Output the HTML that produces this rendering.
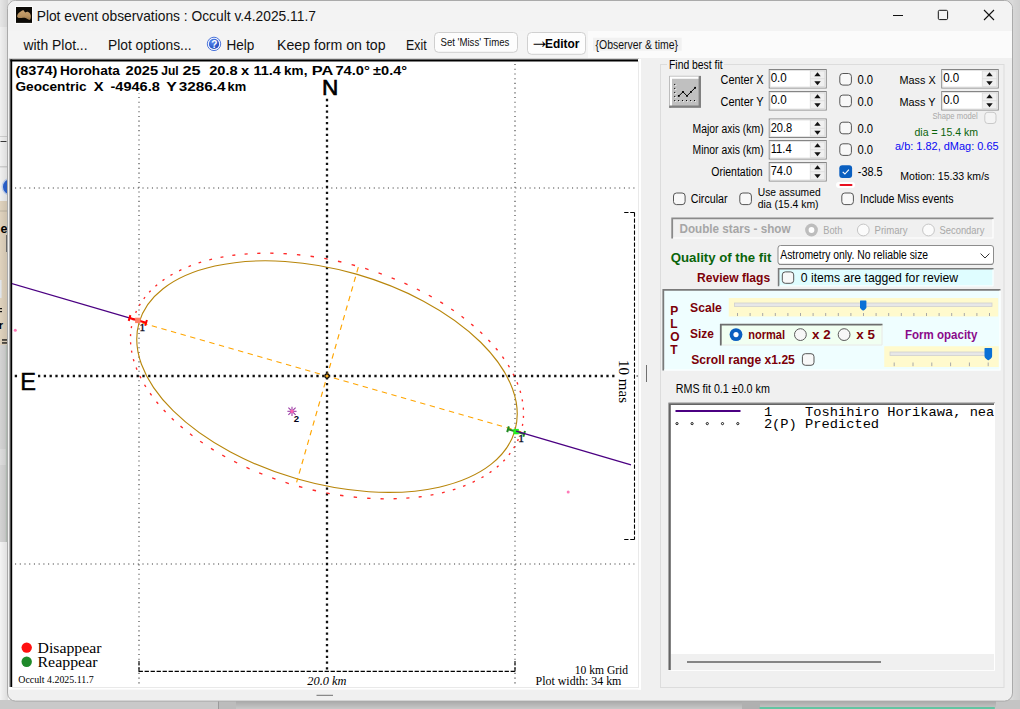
<!DOCTYPE html>
<html lang="en"><head><meta charset="utf-8"><title>Plot event observations : Occult v.4.2025.11.7</title>
<style>
html,body{margin:0;padding:0;background:#d4d4d4;overflow:hidden}
svg{display:block}
text{white-space:pre}
.sa{font-family:"Liberation Sans",Arial,sans-serif}
.se{font-family:"Liberation Serif","Times New Roman",serif}
.mo{font-family:"Liberation Mono","Courier New",monospace}
</style></head><body>
<svg width="1020" height="709" viewBox="0 0 1020 709">
<defs>
<linearGradient id="shL" x1="0" x2="1" y1="0" y2="0"><stop offset="0" stop-color="#000" stop-opacity="0"/><stop offset="1" stop-color="#000" stop-opacity="0.09"/></linearGradient>
<linearGradient id="shR" x1="1" x2="0" y1="0" y2="0"><stop offset="0" stop-color="#000" stop-opacity="0.06"/><stop offset="1" stop-color="#000" stop-opacity="0.02"/></linearGradient>
<linearGradient id="shB" x1="0" x2="0" y1="1" y2="0"><stop offset="0" stop-color="#000" stop-opacity="0.06"/><stop offset="1" stop-color="#000" stop-opacity="0.2"/></linearGradient>
<radialGradient id="helpg" cx="0.35" cy="0.3" r="0.8"><stop offset="0" stop-color="#5c8cf2"/><stop offset="1" stop-color="#1a44b8"/></radialGradient>
<linearGradient id="botg" x1="0" x2="0" y1="0" y2="1"><stop offset="0" stop-color="#a4a4a4"/><stop offset="1" stop-color="#c8c8c8"/></linearGradient>
<linearGradient id="astg" x1="0" x2="0" y1="0" y2="1"><stop offset="0" stop-color="#c8a270"/><stop offset="0.6" stop-color="#b8925f"/><stop offset="1" stop-color="#94744a"/></linearGradient>
<clipPath id="plotclip"><rect x="12" y="61" width="626" height="626"/></clipPath>
<clipPath id="listclip"><rect x="670" y="404" width="324.3" height="250"/></clipPath>
</defs>
<g id="desktop-backdrop">
<rect x="0" y="0" width="1020" height="709" fill="#d9d9d9"/>
<rect x="0" y="0" width="10" height="27" fill="#e6e6e6"/>
<rect x="0" y="27" width="10" height="174" fill="#f0f0f0"/>
<rect x="0" y="136" width="10" height="1" fill="#cfcfcf"/>
<rect x="0" y="166" width="10" height="1.5" fill="#cfcfcf"/>
<rect x="0.5" y="141" width="6" height="1" fill="#3a3a3a"/>
<circle cx="10.7" cy="186.8" r="8.5" fill="#2a62d0" stroke="#c4d4f0" stroke-width="1.5"/>
<rect x="0" y="201" width="10" height="144" fill="#dfd2bd"/>
<rect x="0" y="210.5" width="10" height="1" fill="#bdb3a4"/>
<text class="sa" x="0.50" y="232.80" font-size="12.5" font-weight="bold" fill="#000">e</text>
<rect x="6" y="235" width="1.2" height="17" fill="#6e6e6e"/>
<rect x="0" y="280" width="1.6" height="18" fill="#e2e6ec"/>
<rect x="0" y="308" width="2" height="1.2" fill="#111"/>
<rect x="0" y="311" width="2" height="1.2" fill="#111"/>
<text class="sa" x="-1.20" y="329.00" font-size="11" font-weight="bold" fill="#000">r</text>
<rect x="2" y="339.3" width="5.5" height="1.3" fill="#111"/>
<rect x="2" y="342.3" width="5.5" height="1.3" fill="#111"/>
<rect x="0" y="345" width="10" height="197" fill="#d3d3d3"/>
<rect x="0" y="449" width="10" height="16" fill="#dcdcdc"/>
<rect x="5.8" y="345" width="1.7" height="197" fill="#bcc6be"/>
<rect x="0" y="542" width="10" height="158" fill="#f3f3f3"/>
<rect x="1012" y="0" width="8" height="709" fill="#dcdcdc"/>
<rect x="0" y="700" width="1020" height="9" fill="#c9c9c9"/>
<rect x="218" y="700" width="18" height="9" fill="#bcbcbc"/>
<rect x="218" y="700" width="1" height="9" fill="#9a9a9a"/>
<rect x="236" y="700" width="506" height="9" fill="url(#botg)"/>
<rect x="742" y="700" width="18" height="9" fill="#b0b0b0"/>
<rect x="760" y="700" width="236" height="9" fill="url(#botg)"/>
<rect x="759.6" y="707" width="235.2" height="2" fill="#62c4a2"/>
<rect x="996" y="700" width="24" height="9" fill="#c4c4c4"/>
<rect x="0" y="0" width="8" height="700" fill="url(#shL)"/>
<rect x="1012.5" y="0" width="7.5" height="700" fill="url(#shR)"/>
</g>
<g id="window-frame">
<rect x="7.5" y="0.5" width="1005" height="700.6" rx="8" fill="#f0f0f0" stroke="#aaaaaa" stroke-width="1"/>
<path d="M8 31 V8.5 a7.5 7.5 0 0 1 7.5 -7.5 H1004.5 a7.5 7.5 0 0 1 7.5 7.5 V31 Z" fill="#f3f3f3"/>
<rect x="8" y="31" width="1004" height="27" fill="#fbfbfb"/>
<rect x="8" y="31" width="580" height="27" fill="#f4f4f4"/>
</g>
<g id="titlebar">
<rect x="15" y="6" width="18" height="18" fill="#fcfcfc"/>
<rect x="16" y="7" width="16" height="15.9" fill="#0c0a06"/>
<path d="M17.1 16.2 C17.3 13.9 19.6 12.1 21.4 11.1 C22.2 10.2 23.2 9.8 23.8 10.6 C24.4 11.4 24.6 12.3 25.3 12.4 C26.3 11.9 27.2 11.5 28.2 11.9 C30 12.6 31 14.6 30.9 16.6 C30.9 18.6 30.3 20 29.3 19.9 C28 19.7 27 18.8 25.6 18.1 C24.2 17.4 23.2 17.9 21.8 17.9 C20.2 18.1 18.6 18.3 17.8 17.6 C17.3 17.2 17.1 16.8 17.1 16.2 Z" fill="url(#astg)"/>
<text class="sa" x="36.70" y="20.60" font-size="14.1" fill="#111" textLength="279.20" lengthAdjust="spacingAndGlyphs">Plot event observations : Occult v.4.2025.11.7</text>
<line x1="893" y1="15.5" x2="903" y2="15.5" stroke="#111" stroke-width="1"/>
<rect x="938.3" y="10.3" width="9.3" height="9.3" fill="none" stroke="#111" stroke-width="1" rx="1.3"/>
<path d="M984 10 L994 20 M994 10 L984 20" stroke="#111" stroke-width="1.1" fill="none"/>
</g>
<g id="menubar">
<text class="sa" x="23.50" y="49.60" font-size="14.1" fill="#111" textLength="64.10" lengthAdjust="spacingAndGlyphs">with Plot...</text>
<text class="sa" x="108.00" y="49.60" font-size="14.1" fill="#111" textLength="83.60" lengthAdjust="spacingAndGlyphs">Plot options...</text>
<circle cx="214" cy="43.9" r="6.7" fill="#f4f7ff" stroke="#3a66d6" stroke-width="0.9"/>
<circle cx="214" cy="43.9" r="5.1" fill="url(#helpg)"/>
<text class="sa" x="211.25" y="47.50" font-size="10" font-weight="bold" fill="#fff">?</text>
<text class="sa" x="226.50" y="49.60" font-size="14.1" fill="#111" textLength="27.85" lengthAdjust="spacingAndGlyphs">Help</text>
<text class="sa" x="277.00" y="49.60" font-size="14.1" fill="#111" textLength="108.60" lengthAdjust="spacingAndGlyphs">Keep form on top</text>
<text class="sa" x="406.00" y="49.60" font-size="14.1" fill="#111" textLength="20.60" lengthAdjust="spacingAndGlyphs">Exit</text>
<rect x="434.5" y="32.5" width="83" height="19.8" fill="#fdfdfd" stroke="#cfcfcf" stroke-width="1" rx="4"/>
<text class="sa" x="440.50" y="45.90" font-size="11" fill="#111" textLength="68.85" lengthAdjust="spacingAndGlyphs">Set 'Miss' Times</text>
<rect x="527.5" y="32.5" width="58" height="21.8" fill="#fdfdfd" stroke="#d0d0d0" stroke-width="1" rx="4"/>
<text class="sa" x="529.40" y="48.40" font-size="24" fill="#000" textLength="20.10" lengthAdjust="spacingAndGlyphs">→</text>
<text class="sa" x="545.00" y="47.70" font-size="12.5" font-weight="bold" fill="#000" textLength="34.40" lengthAdjust="spacingAndGlyphs">Editor</text>
<rect x="593" y="37.7" width="88.7" height="13" fill="#f1f1f1"/>
<text class="sa" x="595.50" y="49.20" font-size="12.3" fill="#111" textLength="82.60" lengthAdjust="spacingAndGlyphs">{Observer &amp; time}</text>
</g>
<g id="plot-area">
<rect x="9" y="59" width="630.5" height="628.5" fill="#fff"/>
<rect x="9" y="58.6" width="630" height="1" fill="#a0a0a0"/>
<rect x="9.3" y="59" width="1.2" height="628" fill="#8c8c8c"/>
<rect x="10.4" y="59.5" width="628.6" height="2" fill="#000"/>
<rect x="10.4" y="59.5" width="1.8" height="628" fill="#000"/>
<rect x="638" y="59" width="3" height="630.6" fill="#fff"/>
<rect x="9" y="687" width="632" height="2.6" fill="#fff"/>
<rect x="638.06" y="61" width="0.7" height="626.6" fill="#e0e0e0"/>
<rect x="12" y="687" width="626.7" height="0.7" fill="#e0e0e0"/>
<g clip-path="url(#plotclip)">
<line x1="139" y1="59.25" x2="139" y2="687" stroke="#3a3a3a" stroke-width="1.1" stroke-dasharray="1.1 3.62"/>
<line x1="515" y1="59.25" x2="515" y2="687" stroke="#3a3a3a" stroke-width="1.1" stroke-dasharray="1.1 3.62"/>
<line x1="10.3" y1="188" x2="638" y2="188" stroke="#3a3a3a" stroke-width="1.1" stroke-dasharray="1.1 3.62"/>
<line x1="10.3" y1="564" x2="638" y2="564" stroke="#3a3a3a" stroke-width="1.1" stroke-dasharray="1.1 3.62"/>
<line x1="327" y1="98.85" x2="327" y2="669.5" stroke="#111" stroke-width="2.3" stroke-dasharray="2.3 3.5"/>
<line x1="14.75" y1="376" x2="614.5" y2="376" stroke="#111" stroke-width="2.3" stroke-dasharray="2.3 3.5"/>
<rect x="636.5" y="375" width="2" height="2" fill="#999"/>
<path d="M133.00 320.37L133.58 318.47M135.66 312.86L136.47 311.04M139.26 305.67L140.30 303.92M143.77 298.81L145.04 297.15M149.17 292.33L150.66 290.77M155.44 286.26L157.14 284.81M162.55 280.62L164.45 279.29M170.45 275.45L172.55 274.24M179.12 270.77L181.40 269.68M188.51 266.61L190.97 265.65M198.58 262.97L201.19 262.15M209.27 259.89L212.03 259.20M220.53 257.37L223.43 256.83M232.31 255.43L235.33 255.03M244.56 254.08L247.68 253.83M257.20 253.32L260.42 253.22M270.19 253.16L273.48 253.21M283.45 253.59L286.80 253.79M296.92 254.63L300.32 254.98M310.55 256.25L313.97 256.75M324.25 258.46L327.68 259.10M337.96 261.24L341.38 262.02M351.62 264.58L355.02 265.50M365.16 268.46L368.52 269.52M378.52 272.87L381.82 274.05M391.62 277.78L394.85 279.08M404.41 283.17L407.55 284.59M416.82 289.01L419.86 290.53M428.80 295.27L431.72 296.90M440.28 301.93L443.06 303.65M451.20 308.95L453.84 310.75M461.53 316.29L464.01 318.17M471.19 323.93L473.50 325.88M480.16 331.82L482.28 333.82M488.37 339.92L490.31 341.97M495.81 348.20L497.54 350.29M502.41 356.62L503.93 358.74M508.17 365.13L509.47 367.26M513.04 373.69L514.12 375.83M517.01 382.26L517.85 384.40M520.05 390.81L520.66 392.93M522.14 399.28L522.52 401.38M523.29 407.64L523.43 409.70M523.49 415.84L523.38 417.86M522.72 423.85L522.38 425.82M521.00 431.63L520.42 433.53M518.34 439.14L517.53 440.96M514.74 446.33L513.70 448.08M510.23 453.19L508.96 454.85M504.83 459.67L503.34 461.23M498.56 465.74L496.86 467.19M491.45 471.38L489.55 472.71M483.55 476.55L481.45 477.76M474.88 481.23L472.60 482.32M465.49 485.39L463.03 486.35M455.42 489.03L452.81 489.85M444.73 492.11L441.97 492.80M433.47 494.63L430.57 495.17M421.69 496.57L418.67 496.97M409.44 497.92L406.32 498.17M396.80 498.68L393.58 498.78M383.81 498.84L380.52 498.79M370.55 498.41L367.20 498.21M357.08 497.37L353.68 497.02M343.45 495.75L340.03 495.25M329.75 493.54L326.32 492.90M316.04 490.76L312.62 489.98M302.38 487.42L298.98 486.50M288.84 483.54L285.48 482.48M275.48 479.13L272.18 477.95M262.38 474.22L259.15 472.92M249.59 468.83L246.45 467.41M237.18 462.99L234.14 461.47M225.20 456.73L222.28 455.10M213.72 450.07L210.94 448.35M202.80 443.05L200.16 441.25M192.47 435.71L189.99 433.83M182.81 428.07L180.50 426.12M173.84 420.18L171.72 418.18M165.63 412.08L163.69 410.03M158.19 403.80L156.46 401.71M151.59 395.38L150.07 393.26M145.83 386.87L144.53 384.74M140.96 378.31L139.88 376.17M136.99 369.74L136.15 367.60M133.95 361.19L133.34 359.07M131.86 352.72L131.48 350.62M130.71 344.36L130.57 342.30M130.51 336.16L130.62 334.14M131.28 328.15L131.62 326.18" fill="none" stroke="#ff2a2a" stroke-width="1.35"/>
<ellipse cx="327" cy="376.6" rx="195.52" ry="106.61" transform="rotate(-164.000 327 376.6)" fill="none" stroke="#b8860b" stroke-width="1.12"/>
<line x1="135.68969727435575" y1="321.1426534453008" x2="521.6747186614284" y2="431.82207730005865" stroke="#ffa500" stroke-width="1.15" stroke-dasharray="5.4 4.57" stroke-dashoffset="-6.8"/>
<line x1="358.6" y1="266.2" x2="296.6" y2="482.4" stroke="#ffa500" stroke-width="1.15" stroke-dasharray="5.4 4.57" stroke-dashoffset="-1"/>
<circle cx="327" cy="376" r="2.1" fill="#ffb020" stroke="#111" stroke-width="1.1"/>
<line x1="10" y1="282.9687549563838" x2="137.8" y2="320.4" stroke="#4b0082" stroke-width="1.3"/>
<line x1="129.5467174974092" y1="317.9827023492279" x2="146.05328250259083" y2="322.81729765077205" stroke="#ff0000" stroke-width="2"/>
<line x1="130.38996086395758" y1="315.1036503134404" x2="128.7034741308608" y2="320.8617543850154" stroke="#ff0000" stroke-width="2"/>
<line x1="146.89652586913923" y1="319.93824561498457" x2="145.21003913604244" y2="325.69634968655953" stroke="#ff0000" stroke-width="2"/>
<rect x="135.10000000000002" y="317.7" width="5.4" height="5.4" fill="#ff7f66"/>
<line x1="508.03865429979504" y1="429.23891857366453" x2="524.1613457002051" y2="433.9610814263355" stroke="#228b22" stroke-width="2"/>
<line x1="508.88189766634343" y1="426.35986653787705" x2="507.19541093324665" y2="432.117970609452" stroke="#228b22" stroke-width="2"/>
<line x1="525.0045890667534" y1="431.08202939054803" x2="523.3181023336567" y2="436.840133462123" stroke="#228b22" stroke-width="2"/>
<rect x="513.4" y="428.90000000000003" width="5.4" height="5.4" fill="#22ee22"/>
<line x1="516.1" y1="431.2" x2="631" y2="464.8529738302934" stroke="#4b0082" stroke-width="1.3"/>
<text class="se" x="139.60" y="330.80" font-size="11.4" fill="#080820" stroke="#080820" stroke-width="0.35">1</text>
<text class="se" x="518.30" y="442.00" font-size="11.4" fill="#080820" stroke="#080820" stroke-width="0.35">1</text>
<line x1="287.4" y1="411.3" x2="296.6" y2="411.3" stroke="#9a38a4" stroke-width="1.05"/>
<line x1="292" y1="406.7" x2="292" y2="415.90000000000003" stroke="#9a38a4" stroke-width="1.05"/>
<line x1="288.4" y1="407.7" x2="295.6" y2="414.90000000000003" stroke="#9a38a4" stroke-width="1.05"/>
<line x1="288.4" y1="414.90000000000003" x2="295.6" y2="407.7" stroke="#9a38a4" stroke-width="1.05"/>
<rect x="290.5" y="409.8" width="3" height="3" fill="#ff60b0"/>
<text class="sa" x="293.80" y="422.00" font-size="9.6" font-weight="bold" fill="#000018">2</text>
<circle cx="15.3" cy="330.3" r="1.5" fill="#ff7ab8"/><circle cx="568.2" cy="491.9" r="1.5" fill="#ff7ab8"/>
<line x1="634.5" y1="212.5" x2="634.5" y2="539.5" stroke="#000" stroke-width="1.1" stroke-dasharray="4.3 1.7"/>
<line x1="634.5" y1="212.5" x2="624" y2="212.5" stroke="#000" stroke-width="1.1" stroke-dasharray="4.3 1.7"/>
<line x1="634.5" y1="539.5" x2="624" y2="539.5" stroke="#000" stroke-width="1.1" stroke-dasharray="4.3 1.7"/>
<line x1="138.6" y1="671.4" x2="515.4" y2="671.4" stroke="#000" stroke-width="1.1" stroke-dasharray="4.3 1.7"/>
<line x1="139" y1="671.4" x2="139" y2="661" stroke="#000" stroke-width="1.1" stroke-dasharray="4.3 1.7"/>
<line x1="515" y1="671.4" x2="515" y2="661" stroke="#000" stroke-width="1.1" stroke-dasharray="4.3 1.7"/>
</g>
<rect x="14" y="62" width="396" height="15.5" fill="#fff"/>
<rect x="14" y="77" width="234" height="16" fill="#fff"/>
<text class="sa" y="75" font-size="12.6" font-weight="bold" fill="#000"><tspan x="15.50" textLength="41.85" lengthAdjust="spacingAndGlyphs">(8374)</tspan> <tspan x="60.00" textLength="59.85" lengthAdjust="spacingAndGlyphs">Horohata</tspan> <tspan x="125.50" textLength="32.60" lengthAdjust="spacingAndGlyphs">2025</tspan> <tspan x="161.25" textLength="17.35" lengthAdjust="spacingAndGlyphs">Jul</tspan> <tspan x="182.50" textLength="18.10" lengthAdjust="spacingAndGlyphs">25</tspan> <tspan x="209.20" textLength="28.50" lengthAdjust="spacingAndGlyphs">20.8</tspan> <tspan x="240.90" textLength="8.20" lengthAdjust="spacingAndGlyphs">x</tspan> <tspan x="253.40" textLength="27.40" lengthAdjust="spacingAndGlyphs">11.4</tspan> <tspan x="284.10" textLength="23.30" lengthAdjust="spacingAndGlyphs">km,</tspan> <tspan x="311.70" textLength="20.90" lengthAdjust="spacingAndGlyphs">PA</tspan> <tspan x="335.40" textLength="34.50" lengthAdjust="spacingAndGlyphs">74.0°</tspan> <tspan x="373.10" textLength="34.10" lengthAdjust="spacingAndGlyphs">±0.4°</tspan></text>
<text class="sa" y="91" font-size="12.6" font-weight="bold" fill="#000"><tspan x="15.50" textLength="71.10" lengthAdjust="spacingAndGlyphs">Geocentric</tspan> <tspan x="93.75" textLength="9.85" lengthAdjust="spacingAndGlyphs">X</tspan> <tspan x="110.50" textLength="49.35" lengthAdjust="spacingAndGlyphs">-4946.8</tspan> <tspan x="166.25" textLength="10.35" lengthAdjust="spacingAndGlyphs">Y</tspan> <tspan x="178.75" textLength="46.85" lengthAdjust="spacingAndGlyphs">3286.4</tspan> <tspan x="227.50" textLength="18.60" lengthAdjust="spacingAndGlyphs">km</tspan></text>
<text class="sa" x="322.10" y="94.80" font-size="22.6" fill="#000" stroke="#000" stroke-width="0.7">N</text>
<rect x="20" y="372" width="18" height="19" fill="#fff"/>
<text class="sa" x="20.30" y="390.00" font-size="23.6" fill="#000" stroke="#000" stroke-width="0.5">E</text>
<g transform="translate(619.2 360.5) rotate(90)">
<text class="se" x="-0.50" y="0.00" font-size="15" fill="#000" textLength="43.10" lengthAdjust="spacingAndGlyphs">10 mas</text>
</g>
<circle cx="26.7" cy="647.6" r="5.2" fill="#ff1010"/>
<circle cx="26.7" cy="661.7" r="5.2" fill="#1f8a2a"/>
<text class="se" x="37.50" y="652.70" font-size="15.5" fill="#000" textLength="63.90" lengthAdjust="spacingAndGlyphs">Disappear</text>
<text class="se" x="37.50" y="666.90" font-size="15.5" fill="#000" textLength="60.00" lengthAdjust="spacingAndGlyphs">Reappear</text>
<text class="se" x="18.30" y="683.00" font-size="9.6" fill="#000" textLength="75.30" lengthAdjust="spacingAndGlyphs">Occult 4.2025.11.7</text>
<text class="se" x="307.30" y="685.00" font-size="12.4" font-style="italic" fill="#000" textLength="39.20" lengthAdjust="spacingAndGlyphs">20.0 km</text>
<text class="se" x="574.80" y="674.00" font-size="11.6" fill="#000" textLength="53.30" lengthAdjust="spacingAndGlyphs">10 km Grid</text>
<text class="se" x="535.50" y="684.50" font-size="13" fill="#000" textLength="85.90" lengthAdjust="spacingAndGlyphs">Plot width: 34 km</text>
<line x1="646.5" y1="365" x2="646.5" y2="382" stroke="#707070" stroke-width="1"/>
<line x1="316.5" y1="695.3" x2="333" y2="695.3" stroke="#707070" stroke-width="1"/>
</g>
<g id="side-panel">
<rect x="660.5" y="64.5" width="343.5" height="623" fill="none" stroke="#dcdcdc" stroke-width="1"/>
<rect x="667" y="58" width="57" height="13" fill="#f0f0f0"/>
<text class="sa" x="669.00" y="69.00" font-size="12.3" fill="#000" textLength="53.60" lengthAdjust="spacingAndGlyphs">Find best fit</text>
<rect x="669.2" y="75.9" width="31.8" height="31.9" fill="#c0c0c0"/>
<path d="M669.7 107.8 V76.4 H701" fill="none" stroke="#a6a6a6" stroke-width="1"/>
<path d="M670.9 106.4 V77.7 H699.4" fill="none" stroke="#ffffff" stroke-width="2.2"/>
<path d="M699.8 76.4 V106.6 H669.7" fill="none" stroke="#808080" stroke-width="2.4"/>
<path d="M698.6 76 L701 76 L701 78.4 Z" fill="#808080"/><path d="M669.2 105.4 L669.2 107.8 L671.6 107.8 Z" fill="#808080"/>
<rect x="675.0" y="84.4" width="1.3" height="1.3" fill="#fff"/>
<rect x="674.2" y="83.9" width="1.1" height="1.1" fill="#000"/>
<rect x="675.0" y="88.4" width="1.3" height="1.3" fill="#fff"/>
<rect x="674.2" y="87.9" width="1.1" height="1.1" fill="#000"/>
<rect x="675.0" y="92.4" width="1.3" height="1.3" fill="#fff"/>
<rect x="674.2" y="91.9" width="1.1" height="1.1" fill="#000"/>
<rect x="675.0" y="96.4" width="1.3" height="1.3" fill="#fff"/>
<rect x="674.2" y="95.9" width="1.1" height="1.1" fill="#000"/>
<rect x="675.0" y="100.5" width="1.3" height="1.3" fill="#fff"/>
<rect x="674.2" y="100.0" width="1.1" height="1.1" fill="#000"/>
<rect x="678.6" y="100.5" width="1.3" height="1.3" fill="#fff"/>
<rect x="678.1" y="100.0" width="1.1" height="1.1" fill="#000"/>
<rect x="682.5" y="100.5" width="1.3" height="1.3" fill="#fff"/>
<rect x="682.0" y="100.0" width="1.1" height="1.1" fill="#000"/>
<rect x="686.5" y="100.5" width="1.3" height="1.3" fill="#fff"/>
<rect x="686.0" y="100.0" width="1.1" height="1.1" fill="#000"/>
<rect x="690.6" y="100.5" width="1.3" height="1.3" fill="#fff"/>
<rect x="690.1" y="100.0" width="1.1" height="1.1" fill="#000"/>
<rect x="694.5" y="100.5" width="1.3" height="1.3" fill="#fff"/>
<rect x="694.0" y="100.0" width="1.1" height="1.1" fill="#000"/>
<path d="M678.8 95.9 L683 91.9 L687 95.9 L691 91.9 L695.1 87.8" fill="none" stroke="#000" stroke-width="1"/>
<rect x="677.9" y="95.0" width="1.8" height="1.8" fill="#000"/>
<rect x="682.1" y="91.0" width="1.8" height="1.8" fill="#000"/>
<rect x="686.1" y="95.0" width="1.8" height="1.8" fill="#000"/>
<rect x="690.1" y="91.0" width="1.8" height="1.8" fill="#000"/>
<rect x="694.2" y="86.89999999999999" width="1.8" height="1.8" fill="#000"/>
<text class="sa" x="720.50" y="84.00" font-size="12.3" fill="#000" textLength="43.10" lengthAdjust="spacingAndGlyphs">Center X</text>
<rect x="769.25" y="69.5" width="57" height="18.5" fill="#fff" stroke="#858585" stroke-width="1"/>
<rect x="770.25" y="70.5" width="55" height="16.5" fill="none" stroke="#e4e4e4" stroke-width="1"/>
<rect x="810.25" y="71" width="14.5" height="15.5" fill="#f0f0f0" stroke="#dadada" stroke-width="0.8"/>
<line x1="810.25" y1="78.75" x2="824.75" y2="78.75" stroke="#dadada" stroke-width="0.8"/>
<path d="M814.3 76.15 L817.5 72.35 L820.7 76.15 Z" fill="#111"/>
<path d="M814.3 81.35 L817.5 85.15 L820.7 81.35 Z" fill="#111"/>
<text class="sa" x="770.65" y="82.30" font-size="12.3" fill="#000" textLength="16.10" lengthAdjust="spacingAndGlyphs">0.0</text>
<rect x="839.8" y="73.5" width="11.6" height="11.6" fill="#f8f8f8" stroke="#555555" stroke-width="1" rx="3"/>
<text class="sa" x="857.50" y="84.00" font-size="12.3" fill="#000" textLength="15.60" lengthAdjust="spacingAndGlyphs">0.0</text>
<text class="sa" x="720.50" y="105.50" font-size="12.3" fill="#000" textLength="43.10" lengthAdjust="spacingAndGlyphs">Center Y</text>
<rect x="769.25" y="91.5" width="57" height="18.5" fill="#fff" stroke="#858585" stroke-width="1"/>
<rect x="770.25" y="92.5" width="55" height="16.5" fill="none" stroke="#e4e4e4" stroke-width="1"/>
<rect x="810.25" y="93" width="14.5" height="15.5" fill="#f0f0f0" stroke="#dadada" stroke-width="0.8"/>
<line x1="810.25" y1="100.75" x2="824.75" y2="100.75" stroke="#dadada" stroke-width="0.8"/>
<path d="M814.3 98.15 L817.5 94.35 L820.7 98.15 Z" fill="#111"/>
<path d="M814.3 103.35 L817.5 107.15 L820.7 103.35 Z" fill="#111"/>
<text class="sa" x="770.65" y="104.30" font-size="12.3" fill="#000" textLength="16.10" lengthAdjust="spacingAndGlyphs">0.0</text>
<rect x="839.8" y="95.1" width="11.6" height="11.6" fill="#f8f8f8" stroke="#555555" stroke-width="1" rx="3"/>
<text class="sa" x="857.50" y="105.50" font-size="12.3" fill="#000" textLength="15.60" lengthAdjust="spacingAndGlyphs">0.0</text>
<text class="sa" x="899.50" y="84.00" font-size="11.6" fill="#000" textLength="36.10" lengthAdjust="spacingAndGlyphs">Mass X</text>
<rect x="941.75" y="69.5" width="56.5" height="18.5" fill="#fff" stroke="#858585" stroke-width="1"/>
<rect x="942.75" y="70.5" width="54.5" height="16.5" fill="none" stroke="#e4e4e4" stroke-width="1"/>
<rect x="982.25" y="71" width="14.5" height="15.5" fill="#f0f0f0" stroke="#dadada" stroke-width="0.8"/>
<line x1="982.25" y1="78.75" x2="996.75" y2="78.75" stroke="#dadada" stroke-width="0.8"/>
<path d="M986.3 76.15 L989.5 72.35 L992.7 76.15 Z" fill="#111"/>
<path d="M986.3 81.35 L989.5 85.15 L992.7 81.35 Z" fill="#111"/>
<text class="sa" x="943.15" y="82.30" font-size="12.3" fill="#000" textLength="16.10" lengthAdjust="spacingAndGlyphs">0.0</text>
<text class="sa" x="899.50" y="105.50" font-size="11.6" fill="#000" textLength="36.10" lengthAdjust="spacingAndGlyphs">Mass Y</text>
<rect x="941.75" y="91.5" width="56.5" height="18.5" fill="#fff" stroke="#858585" stroke-width="1"/>
<rect x="942.75" y="92.5" width="54.5" height="16.5" fill="none" stroke="#e4e4e4" stroke-width="1"/>
<rect x="982.25" y="93" width="14.5" height="15.5" fill="#f0f0f0" stroke="#dadada" stroke-width="0.8"/>
<line x1="982.25" y1="100.75" x2="996.75" y2="100.75" stroke="#dadada" stroke-width="0.8"/>
<path d="M986.3 98.15 L989.5 94.35 L992.7 98.15 Z" fill="#111"/>
<path d="M986.3 103.35 L989.5 107.15 L992.7 103.35 Z" fill="#111"/>
<text class="sa" x="943.15" y="104.30" font-size="12.3" fill="#000" textLength="16.10" lengthAdjust="spacingAndGlyphs">0.0</text>
<text class="sa" x="932.50" y="119.00" font-size="8.4" fill="#a8a8a8" textLength="45.10" lengthAdjust="spacingAndGlyphs">Shape model</text>
<rect x="984.8" y="112.3" width="11.2" height="11.2" fill="#f4f4f4" stroke="#c9c9c9" stroke-width="1" rx="3"/>
<text class="sa" x="692.50" y="132.75" font-size="12.3" fill="#000" textLength="71.10" lengthAdjust="spacingAndGlyphs">Major axis (km)</text>
<rect x="769.25" y="119.0" width="57" height="18.5" fill="#fff" stroke="#858585" stroke-width="1"/>
<rect x="770.25" y="120.0" width="55" height="16.5" fill="none" stroke="#e4e4e4" stroke-width="1"/>
<rect x="810.25" y="120.5" width="14.5" height="15.5" fill="#f0f0f0" stroke="#dadada" stroke-width="0.8"/>
<line x1="810.25" y1="128.25" x2="824.75" y2="128.25" stroke="#dadada" stroke-width="0.8"/>
<path d="M814.3 125.65 L817.5 121.85 L820.7 125.65 Z" fill="#111"/>
<path d="M814.3 130.85 L817.5 134.65 L820.7 130.85 Z" fill="#111"/>
<text class="sa" x="770.65" y="131.80" font-size="12.3" fill="#000" textLength="21.60" lengthAdjust="spacingAndGlyphs">20.8</text>
<rect x="839.8" y="122.2" width="11.6" height="11.6" fill="#f8f8f8" stroke="#555555" stroke-width="1" rx="3"/>
<text class="sa" x="857.50" y="132.75" font-size="12.3" fill="#000" textLength="15.60" lengthAdjust="spacingAndGlyphs">0.0</text>
<text class="sa" x="914.50" y="135.50" font-size="11.2" fill="#0a640a" textLength="63.60" lengthAdjust="spacingAndGlyphs">dia = 15.4 km</text>
<text class="sa" x="692.50" y="154.30" font-size="12.3" fill="#000" textLength="71.10" lengthAdjust="spacingAndGlyphs">Minor axis (km)</text>
<rect x="769.25" y="140.5" width="57" height="18.5" fill="#fff" stroke="#858585" stroke-width="1"/>
<rect x="770.25" y="141.5" width="55" height="16.5" fill="none" stroke="#e4e4e4" stroke-width="1"/>
<rect x="810.25" y="142" width="14.5" height="15.5" fill="#f0f0f0" stroke="#dadada" stroke-width="0.8"/>
<line x1="810.25" y1="149.75" x2="824.75" y2="149.75" stroke="#dadada" stroke-width="0.8"/>
<path d="M814.3 147.15 L817.5 143.35 L820.7 147.15 Z" fill="#111"/>
<path d="M814.3 152.35 L817.5 156.15 L820.7 152.35 Z" fill="#111"/>
<text class="sa" x="770.65" y="153.30" font-size="12.3" fill="#000" textLength="21.10" lengthAdjust="spacingAndGlyphs">11.4</text>
<rect x="839.8" y="143.8" width="11.6" height="11.6" fill="#f8f8f8" stroke="#555555" stroke-width="1" rx="3"/>
<text class="sa" x="857.50" y="154.30" font-size="12.3" fill="#000" textLength="15.60" lengthAdjust="spacingAndGlyphs">0.0</text>
<text class="sa" x="895.00" y="149.75" font-size="11.2" fill="#0808f4" textLength="103.60" lengthAdjust="spacingAndGlyphs">a/b: 1.82, dMag: 0.65</text>
<text class="sa" x="711.25" y="175.75" font-size="12.3" fill="#000" textLength="51.35" lengthAdjust="spacingAndGlyphs">Orientation</text>
<rect x="769.25" y="162.5" width="57" height="18.5" fill="#fff" stroke="#858585" stroke-width="1"/>
<rect x="770.25" y="163.5" width="55" height="16.5" fill="none" stroke="#e4e4e4" stroke-width="1"/>
<rect x="810.25" y="164" width="14.5" height="15.5" fill="#f0f0f0" stroke="#dadada" stroke-width="0.8"/>
<line x1="810.25" y1="171.75" x2="824.75" y2="171.75" stroke="#dadada" stroke-width="0.8"/>
<path d="M814.3 169.15 L817.5 165.35 L820.7 169.15 Z" fill="#111"/>
<path d="M814.3 174.35 L817.5 178.15 L820.7 174.35 Z" fill="#111"/>
<text class="sa" x="770.65" y="175.30" font-size="12.3" fill="#000" textLength="21.60" lengthAdjust="spacingAndGlyphs">74.0</text>
<rect x="839.3" y="165.2" width="12.8" height="12.8" fill="#0a5fc0" rx="3"/>
<path d="M842.6999999999999 171.79999999999998 L844.9 174.0 L848.9 169.6" fill="none" stroke="#fff" stroke-width="1.1"/>
<text class="sa" x="857.75" y="175.75" font-size="12.3" fill="#000" textLength="24.85" lengthAdjust="spacingAndGlyphs">-38.5</text>
<rect x="836" y="182" width="19" height="6" fill="#fff" rx="3"/>
<line x1="840.5" y1="185" x2="851.5" y2="185" stroke="#e81020" stroke-width="2" stroke-linecap="round"/>
<text class="sa" x="900.25" y="180.00" font-size="11.6" fill="#000" textLength="89.10" lengthAdjust="spacingAndGlyphs">Motion: 15.33 km/s</text>
<rect x="673.5" y="193.0" width="11.6" height="11.6" fill="#f8f8f8" stroke="#555555" stroke-width="1" rx="3"/>
<text class="sa" x="690.75" y="203.00" font-size="12.3" fill="#000" textLength="36.85" lengthAdjust="spacingAndGlyphs">Circular</text>
<rect x="739.8" y="193.0" width="11.6" height="11.6" fill="#f8f8f8" stroke="#555555" stroke-width="1" rx="3"/>
<text class="sa" x="757.75" y="196.25" font-size="11.4" fill="#000" textLength="62.85" lengthAdjust="spacingAndGlyphs">Use assumed</text>
<text class="sa" x="757.75" y="208.00" font-size="11.4" fill="#000" textLength="60.85" lengthAdjust="spacingAndGlyphs">dia (15.4 km)</text>
<rect x="841.8" y="193.0" width="11.6" height="11.6" fill="#f8f8f8" stroke="#555555" stroke-width="1" rx="3"/>
<text class="sa" x="860.00" y="203.00" font-size="12.3" fill="#000" textLength="93.60" lengthAdjust="spacingAndGlyphs">Include Miss events</text>
<rect x="671.5" y="217.5" width="322" height="21" fill="#f0f0f0"/>
<path d="M672.2 238.5 V218.3 H993.5" fill="none" stroke="#8a8a8a" stroke-width="1.8"/>
<path d="M993 219 V238 H673" fill="none" stroke="#ffffff" stroke-width="1.2"/>
<text class="sa" x="679.50" y="233.00" font-size="12.4" font-weight="bold" fill="#a6a6a6" textLength="111.10" lengthAdjust="spacingAndGlyphs">Double stars - show</text>
<circle cx="811.5" cy="230" r="6.4" fill="#bdbdbd"/>
<circle cx="811.5" cy="230" r="2.9" fill="#fff"/>
<text class="sa" x="823.25" y="234.00" font-size="10.2" fill="#a8a8a8" textLength="19.10" lengthAdjust="spacingAndGlyphs">Both</text>
<circle cx="863.3" cy="230" r="5.9" fill="#fbfbfb" stroke="#c6c6c6" stroke-width="1"/>
<text class="sa" x="874.50" y="234.00" font-size="10.2" fill="#a8a8a8" textLength="33.10" lengthAdjust="spacingAndGlyphs">Primary</text>
<circle cx="928.5" cy="230" r="5.9" fill="#fbfbfb" stroke="#c6c6c6" stroke-width="1"/>
<text class="sa" x="939.50" y="234.00" font-size="10.2" fill="#a8a8a8" textLength="44.85" lengthAdjust="spacingAndGlyphs">Secondary</text>
<text class="sa" x="670.75" y="261.75" font-size="12.8" font-weight="bold" fill="#0a640a" textLength="100.60" lengthAdjust="spacingAndGlyphs">Quality of the fit</text>
<rect x="778" y="245.5" width="215.5" height="19" fill="#fff" stroke="#8c8c8c" stroke-width="1" rx="2.5"/>
<line x1="779" y1="264.3" x2="992.5" y2="264.3" stroke="#868686" stroke-width="1"/>
<text class="sa" x="780.25" y="259.00" font-size="12.3" fill="#000" textLength="147.85" lengthAdjust="spacingAndGlyphs">Astrometry only. No reliable size</text>
<path d="M980.6 253.6 L985 258 L989.4 253.6" fill="none" stroke="#333" stroke-width="1"/>
<text class="sa" x="697.00" y="281.75" font-size="12.8" font-weight="bold" fill="#7c0008" textLength="73.10" lengthAdjust="spacingAndGlyphs">Review flags</text>
<rect x="778" y="268" width="215.5" height="18.3" fill="#dffdff"/>
<path d="M778.6 286.3 V268.7 H993.5" fill="none" stroke="#7a7a7a" stroke-width="1.6"/>
<path d="M993 269.5 V285.9 H779.5" fill="none" stroke="#ffffff" stroke-width="1"/>
<rect x="782.3" y="271.9" width="11.4" height="11.4" fill="#f8f8f8" stroke="#555555" stroke-width="1" rx="3"/>
<text class="sa" x="800.75" y="282.25" font-size="13" fill="#000" textLength="157.35" lengthAdjust="spacingAndGlyphs">0 items are tagged for review</text>
<rect x="662.5" y="289" width="338" height="81.5" fill="#effeff"/>
<path d="M663.3 370.5 V289.8 H1000.5" fill="none" stroke="#7a7a7a" stroke-width="1.8"/>
<path d="M1000 290.5 V370 H664" fill="none" stroke="#ffffff" stroke-width="1.2"/>
<text class="sa" x="670.30" y="315.20" font-size="12" font-weight="bold" fill="#7c0008">P</text>
<text class="sa" x="670.30" y="327.90" font-size="12" font-weight="bold" fill="#7c0008">L</text>
<text class="sa" x="670.30" y="340.90" font-size="12" font-weight="bold" fill="#7c0008">O</text>
<text class="sa" x="670.30" y="354.20" font-size="12" font-weight="bold" fill="#7c0008">T</text>
<text class="sa" x="690.00" y="311.75" font-size="12.6" font-weight="bold" fill="#7c0008" textLength="31.85" lengthAdjust="spacingAndGlyphs">Scale</text>
<rect x="728.75" y="298" width="269.5" height="18.5" fill="#fffacd"/>
<rect x="734.5" y="303" width="257.5" height="3.5" fill="#e7e7e7" stroke="#cfcfcf" stroke-width="0.8"/>
<line x1="737.5" y1="313" x2="737.5" y2="316" stroke="#a8a8a8" stroke-width="1"/>
<line x1="750.1" y1="313" x2="750.1" y2="316" stroke="#a8a8a8" stroke-width="1"/>
<line x1="762.7" y1="313" x2="762.7" y2="316" stroke="#a8a8a8" stroke-width="1"/>
<line x1="775.3" y1="313" x2="775.3" y2="316" stroke="#a8a8a8" stroke-width="1"/>
<line x1="787.9" y1="313" x2="787.9" y2="316" stroke="#a8a8a8" stroke-width="1"/>
<line x1="800.5" y1="313" x2="800.5" y2="316" stroke="#a8a8a8" stroke-width="1"/>
<line x1="813.1" y1="313" x2="813.1" y2="316" stroke="#a8a8a8" stroke-width="1"/>
<line x1="825.7" y1="313" x2="825.7" y2="316" stroke="#a8a8a8" stroke-width="1"/>
<line x1="838.3" y1="313" x2="838.3" y2="316" stroke="#a8a8a8" stroke-width="1"/>
<line x1="850.9" y1="313" x2="850.9" y2="316" stroke="#a8a8a8" stroke-width="1"/>
<line x1="863.5" y1="313" x2="863.5" y2="316" stroke="#a8a8a8" stroke-width="1"/>
<line x1="876.1" y1="313" x2="876.1" y2="316" stroke="#a8a8a8" stroke-width="1"/>
<line x1="888.7" y1="313" x2="888.7" y2="316" stroke="#a8a8a8" stroke-width="1"/>
<line x1="901.3" y1="313" x2="901.3" y2="316" stroke="#a8a8a8" stroke-width="1"/>
<line x1="913.9" y1="313" x2="913.9" y2="316" stroke="#a8a8a8" stroke-width="1"/>
<line x1="926.5" y1="313" x2="926.5" y2="316" stroke="#a8a8a8" stroke-width="1"/>
<line x1="939.1" y1="313" x2="939.1" y2="316" stroke="#a8a8a8" stroke-width="1"/>
<line x1="951.7" y1="313" x2="951.7" y2="316" stroke="#a8a8a8" stroke-width="1"/>
<line x1="964.3" y1="313" x2="964.3" y2="316" stroke="#a8a8a8" stroke-width="1"/>
<line x1="976.9" y1="313" x2="976.9" y2="316" stroke="#a8a8a8" stroke-width="1"/>
<line x1="989.5" y1="313" x2="989.5" y2="316" stroke="#a8a8a8" stroke-width="1"/>
<path d="M860 301 a0.5 0.5 0 0 1 0.5 -0.5 H865.9 a0.5 0.5 0 0 1 0.5 0.5 V307.2 Q866.4 308.4 865.2 309.3 L863.7 310.4 Q863.2 310.7 862.7 310.4 L861.2 309.3 Q860 308.4 860 307.2 Z" fill="#0a70d6"/>
<text class="sa" x="690.00" y="338.00" font-size="12.6" font-weight="bold" fill="#7c0008" textLength="23.85" lengthAdjust="spacingAndGlyphs">Size</text>
<rect x="720" y="323.75" width="162.5" height="21.75" fill="#f1fff1"/>
<path d="M720.8 345.5 V324.6 H882.5" fill="none" stroke="#6e6e6e" stroke-width="1.8"/>
<path d="M882 325.5 V345 H721.8" fill="none" stroke="#e8e8e8" stroke-width="1"/>
<circle cx="736" cy="334.6" r="6.4" fill="#0a5fc0"/>
<circle cx="736" cy="334.6" r="2.6" fill="#fff"/>
<text class="sa" x="748.25" y="338.75" font-size="12.6" font-weight="bold" fill="#7c0008" textLength="36.85" lengthAdjust="spacingAndGlyphs">normal</text>
<circle cx="800.4" cy="334.6" r="5.9" fill="#f7f7f7" stroke="#5a5a5a" stroke-width="1"/>
<text class="sa" x="812.00" y="338.75" font-size="12.6" font-weight="bold" fill="#7c0008" textLength="18.60" lengthAdjust="spacingAndGlyphs">x 2</text>
<circle cx="844.1" cy="334.6" r="5.9" fill="#f7f7f7" stroke="#5a5a5a" stroke-width="1"/>
<text class="sa" x="856.25" y="338.75" font-size="12.6" font-weight="bold" fill="#7c0008" textLength="18.60" lengthAdjust="spacingAndGlyphs">x 5</text>
<text class="sa" x="905.00" y="338.75" font-size="12.6" font-weight="bold" fill="#8a0a8a" textLength="72.35" lengthAdjust="spacingAndGlyphs">Form opacity</text>
<text class="sa" x="691.25" y="363.75" font-size="12.6" font-weight="bold" fill="#7c0008" textLength="103.60" lengthAdjust="spacingAndGlyphs">Scroll range x1.25</text>
<rect x="802.4" y="353.7" width="11.6" height="11.6" fill="#f8f8f8" stroke="#555555" stroke-width="1" rx="3"/>
<rect x="884.25" y="346.25" width="114.5" height="20.75" fill="#fffacd"/>
<rect x="890" y="352" width="101.5" height="3.5" fill="#e7e7e7" stroke="#cfcfcf" stroke-width="0.8"/>
<line x1="894.2" y1="362.5" x2="894.2" y2="366.2" stroke="#a8a8a8" stroke-width="1"/>
<line x1="913.0" y1="362.5" x2="913.0" y2="366.2" stroke="#a8a8a8" stroke-width="1"/>
<line x1="931.8000000000001" y1="362.5" x2="931.8000000000001" y2="366.2" stroke="#a8a8a8" stroke-width="1"/>
<line x1="950.6" y1="362.5" x2="950.6" y2="366.2" stroke="#a8a8a8" stroke-width="1"/>
<line x1="969.4000000000001" y1="362.5" x2="969.4000000000001" y2="366.2" stroke="#a8a8a8" stroke-width="1"/>
<line x1="988.2" y1="362.5" x2="988.2" y2="366.2" stroke="#a8a8a8" stroke-width="1"/>
<path d="M984.5 348.6 a0.6 0.6 0 0 1 0.6 -0.6 H991.5 a0.6 0.6 0 0 1 0.6 0.6 V356.2 Q992.1 357.6 990.6 358.8 L988.9 360 Q988.3 360.4 987.7 360 L986 358.8 Q984.5 357.6 984.5 356.2 Z" fill="#0a70d6"/>
<text class="sa" x="675.75" y="393.00" font-size="12.3" fill="#000" textLength="94.10" lengthAdjust="spacingAndGlyphs">RMS fit 0.1 ±0.0 km</text>
<rect x="668" y="402.3" width="327" height="268" fill="#fff"/>
<path d="M668.5 670 V402.8 H995" fill="none" stroke="#a6a6a6" stroke-width="1"/>
<path d="M669.9 670 V404.2 H994" fill="none" stroke="#646464" stroke-width="1.8"/>
<rect x="671" y="654" width="323" height="16" fill="#f0f0f0"/>
<line x1="687" y1="662" x2="881" y2="662" stroke="#858585" stroke-width="2"/>
<rect x="671" y="670" width="324" height="0.8" fill="#fff"/>
<g clip-path="url(#listclip)">
<line x1="675.5" y1="411" x2="740.5" y2="411" stroke="#4b0082" stroke-width="1.8"/>
<circle cx="677" cy="423.6" r="1.1" fill="#fff" stroke="#111" stroke-width="0.95"/>
<circle cx="692.1" cy="423.6" r="1.1" fill="#fff" stroke="#111" stroke-width="0.95"/>
<circle cx="707.3" cy="423.6" r="1.1" fill="#fff" stroke="#111" stroke-width="0.95"/>
<circle cx="722.5" cy="423.6" r="1.1" fill="#fff" stroke="#111" stroke-width="0.95"/>
<circle cx="737.8" cy="423.6" r="1.1" fill="#fff" stroke="#111" stroke-width="0.95"/>
<text class="mo" x="763.90" y="415.50" font-size="11.9" fill="#000" textLength="238.67" lengthAdjust="spacingAndGlyphs">1    Toshihiro Horikawa, near</text>
<text class="mo" x="763.90" y="428.00" font-size="11.9" fill="#000" textLength="115.22" lengthAdjust="spacingAndGlyphs">2(P) Predicted</text>
</g>
</g>
</svg>
</body></html>
